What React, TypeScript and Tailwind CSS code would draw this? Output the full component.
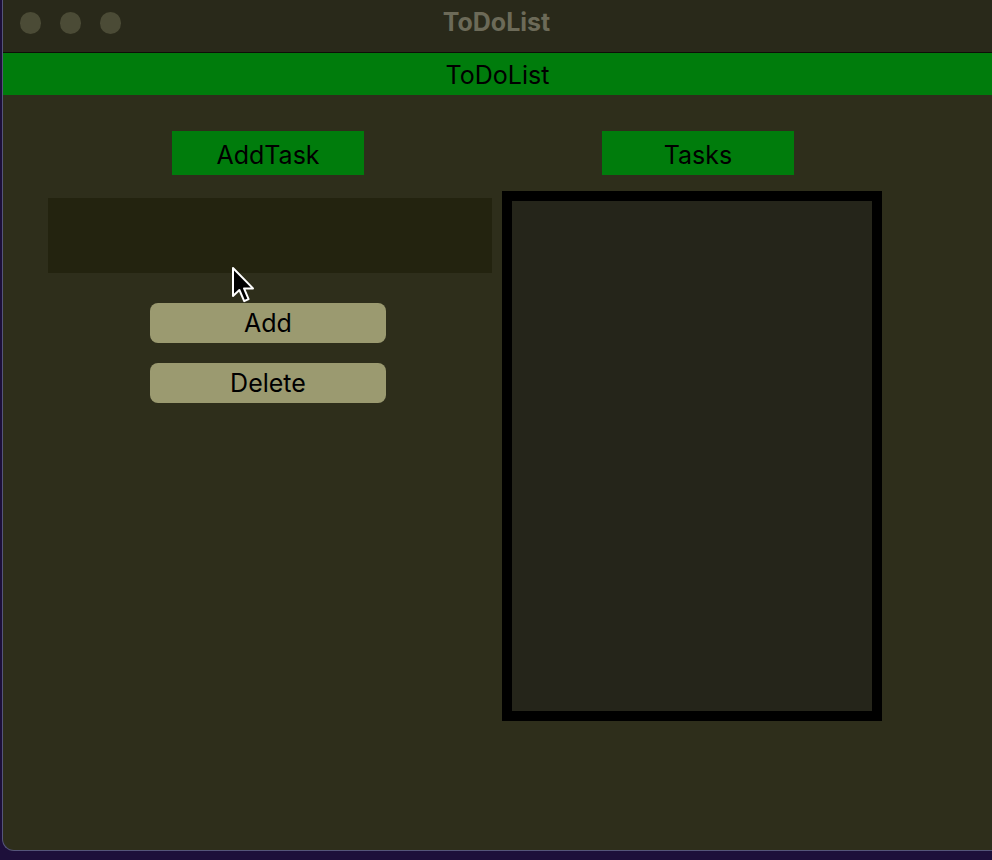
const font = { fontFamily: "Inter, 'Liberation Sans', sans-serif" };

const Cursor = () => (
  <svg
    className="absolute left-[228px] top-[266px]"
    width="26"
    height="38"
    viewBox="0 0 13 19"
  >
    <path
      d="M1 1 L1 15 L4.2 12 L6.6 17.6 L8.8 16.6 L6.5 11.2 L11 11.2 Z"
      fill="#000"
      stroke="#fff"
      strokeWidth="1"
      strokeLinejoin="round"
    />
  </svg>
);

export default function App() {
  return (
    <div className="w-[992px] h-[860px] bg-[#1d0f3a] overflow-hidden" style={font}>
      <div className="relative ml-[2px] w-[990px] h-[851px] rounded-bl-[12px] bg-[#2e2e1b] flex flex-col border-l border-b border-[#55557a]">
        {/* window title bar */}
        <div className="relative h-[53px] bg-[#29291a] border-b border-[#0e0e08] flex items-start pt-[12px]">
          <div className="flex gap-[19px] pl-[17px]">
            <span className="w-[21px] h-[22px] rounded-full bg-[#4b4b36]" />
            <span className="w-[21px] h-[22px] rounded-full bg-[#4b4b36]" />
            <span className="w-[21px] h-[22px] rounded-full bg-[#4b4b36]" />
          </div>
          <div className="absolute inset-x-0 top-[6px] flex justify-center pr-[2px] text-[25px] leading-[32px] font-bold text-[#6c6a58]">
            ToDoList
          </div>
        </div>

        {/* app header */}
        <div className="h-[42px] bg-[#007c0c] flex items-center justify-center pt-[3px] text-[25px] text-black">
          ToDoList
        </div>

        <div className="flex pt-[36px]">
          {/* left column */}
          <div className="w-[497px] flex flex-col">
            <div className="ml-[169px] w-[192px] h-[44px] bg-[#007c0c] flex items-center justify-center pt-[5px] text-[25px] text-black">
              AddTask
            </div>
            <div className="ml-[45px] mt-[23px] w-[444px] h-[75px] bg-[#23230f]" />
            <button className="ml-[147px] mt-[30px] w-[236px] h-[40px] rounded-[8px] bg-[#9b9a70] text-[25px] leading-[30px] text-black">
              Add
            </button>
            <button className="ml-[147px] mt-[20px] w-[236px] h-[40px] rounded-[8px] bg-[#9b9a70] text-[25px] leading-[30px] text-black">
              Delete
            </button>
          </div>

          {/* right column */}
          <div className="flex flex-col">
            <div className="ml-[102px] w-[192px] h-[44px] bg-[#007c0c] flex items-center justify-center pt-[5px] text-[25px] text-black">
              Tasks
            </div>
            <div className="mt-[16px] ml-[2px] w-[380px] h-[530px] border-[10px] border-black bg-[#25251a]" />
          </div>
        </div>

        <Cursor />
      </div>
    </div>
  );
}
